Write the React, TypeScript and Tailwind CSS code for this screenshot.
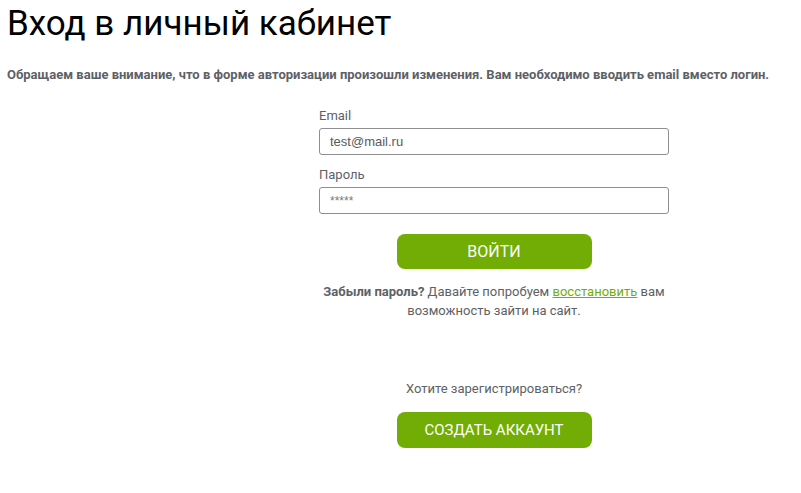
export default function App() {
  return (
    <div className="min-h-[493px] bg-white px-[7px] font-['Roboto',sans-serif] text-[#5b5b5b]">
      <h1 className="pt-[2px] text-[35px] leading-[44px] font-normal text-black">Вход в личный кабинет</h1>
      <p className="mt-[21px] text-[13px] leading-[16px] font-bold text-[#5d6166]">
        Обращаем ваше внимание, что в форме авторизации произошли изменения. Вам необходимо вводить email вместо логин.
      </p>
      <div className="ml-[312px] mt-[23px] flex w-[350px] flex-col">
        <label className="text-[13px] leading-[20px] text-[#5d6166]">Email</label>
        <input
          className="mt-[2px] h-[27px] rounded-[3px] border border-[#8f8f8f] px-[10px] font-['Liberation_Sans',sans-serif] text-[13px] text-[#5a5a5a] outline-none"
          defaultValue="test@mail.ru"
        />
        <label className="mt-[10px] text-[13px] leading-[20px] text-[#5d6166]">Пароль</label>
        <input
          className="mt-[2px] h-[27px] rounded-[3px] border border-[#8f8f8f] px-[10px] font-['Liberation_Sans',sans-serif] text-[12px] text-[#777] outline-none"
          defaultValue="*****"
        />
        <button className="mx-auto mt-[20px] h-[35px] w-[195px] rounded-[8px] bg-[#72ad05] text-[16px] text-white">
          ВОЙТИ
        </button>
        <p className="mt-[13px] text-center text-[13px] leading-[19px] text-[#5d6166]">
          <b>Забыли пароль?</b> Давайте попробуем{' '}
          <a href="#" className="text-[#72ad05] underline">восстановить</a> вам
          <br />
          возможность зайти на сайт.
        </p>
        <p className="mt-[59px] text-center text-[13px] leading-[19px] text-[#5d6166]">Хотите зарегистрироваться?</p>
        <button className="mx-auto mt-[14px] h-[36px] w-[195px] rounded-[8px] bg-[#72ad05] text-[15px] text-white">
          СОЗДАТЬ АККАУНТ
        </button>
      </div>
    </div>
  );
}
